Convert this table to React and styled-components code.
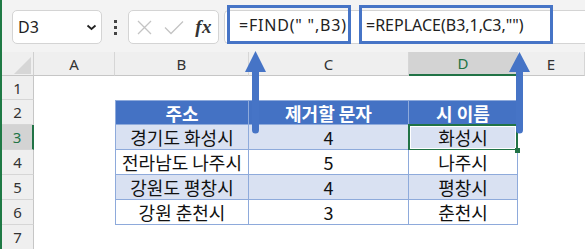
import React from "react";
import styled, { createGlobalStyle } from "styled-components";

// Global reset
const GlobalStyle = createGlobalStyle`
  html, body {
    margin: 0;
    padding: 0;
    background: #fff;
  }
`;

const BLUE = "#4674c6";
const GREEN = "#217346";

const columns = ["A", "B", "C", "D", "E"];

const rows = [
  { kind: "header", cells: ["주소", "제거할 문자", "시 이름"] },
  { kind: "band", cells: ["경기도 화성시", "4", "화성시"] },
  { kind: "plain", cells: ["전라남도 나주시", "5", "나주시"] },
  { kind: "band", cells: ["강원도 평창시", "4", "평창시"] },
  { kind: "plain", cells: ["강원 춘천시", "3", "춘천시"] },
];

// Workbook component
export default function App() {
  return (
    <>
      <GlobalStyle />
      <Page>
        <FormulaBar>
          <NameBox>
            <span>D3</span>
            <svg width="11" height="7" viewBox="0 0 11 7">
              <path d="M1.5 1.5 L5.5 5 L9.5 1.5" fill="none" stroke="#222" strokeWidth="1.8" />
            </svg>
          </NameBox>
          <Dots>
            <i />
            <i />
            <i />
          </Dots>
          <FxBox>
            <svg width="15" height="15" viewBox="0 0 15 15">
              <path d="M1 1 L14 14 M14 1 L1 14" stroke="#c4c4c4" strokeWidth="1.3" />
            </svg>
            <svg width="20" height="15" viewBox="0 0 20 15">
              <path d="M1 7.5 L7 13.5 L19 1.5" fill="none" stroke="#c4c4c4" strokeWidth="1.3" />
            </svg>
            <FxText>fx</FxText>
          </FxBox>
          <FormulaField>
            <Callout $width={124} $pad={9} $gap={2} $spacing={0.8}>
              =FIND(" ",B3)
            </Callout>
            <Callout $width={194} $pad={4} $gap={8}>
              =REPLACE(B3,1,C3,"")
            </Callout>
          </FormulaField>
        </FormulaBar>

        <Sheet>
          <Corner />
          {columns.map((c) => (
            <ColHeader key={c} $active={c === "D"}>
              {c}
            </ColHeader>
          ))}

          <RowHeader>1</RowHeader>
          {columns.map((c) => (
            <Cell key={c} />
          ))}

          {rows.map((row, i) => {
            const n = i + 2;
            return (
              <React.Fragment key={n}>
                <RowHeader $active={n === 3}>{n}</RowHeader>
                <Cell />
                {row.cells.map((text, j) => (
                  <TableCell
                    key={j}
                    $kind={row.kind}
                    $first={j === 0}
                    $top={row.kind === "header"}
                    $active={n === 3 && j === 2}
                  >
                    {text}
                  </TableCell>
                ))}
                <Cell />
              </React.Fragment>
            );
          })}

          <RowHeader>7</RowHeader>
          {columns.map((c) => (
            <Cell key={c} />
          ))}
        </Sheet>

        <Arrows width="585" height="249" viewBox="0 0 585 249">
          <path d="M255.5 51 L266 72 L259 72 L259 130 A3.5 3.5 0 0 1 252 130 L252 72 L245 72 Z" fill={BLUE} />
          <path d="M519.5 52 L530 72 L523 72 L523 130 A3.5 3.5 0 0 1 516 130 L516 72 L509 72 Z" fill={BLUE} />
        </Arrows>
      </Page>
    </>
  );
}

// Styles
const Page = styled.div`
  position: relative;
  width: 585px;
  height: 249px;
  overflow: hidden;
  box-sizing: border-box;
  border-left: 2px solid #1f7a45;
  background: #fff;
`;

const FormulaBar = styled.div`
  display: flex;
  align-items: flex-start;
  height: 52px;
  background: #f3f3f3;
`;

const NameBox = styled.div`
  display: flex;
  align-items: center;
  justify-content: space-between;
  box-sizing: border-box;
  width: 90px;
  height: 34px;
  margin: 10px 0 0 10px;
  padding: 0 4px 0 5px;
  background: #fff;
  border: 1px solid #d4d4d4;
  border-radius: 5px;
  font-family: "Noto Sans", sans-serif;
  font-size: 16px;
  color: #222;
`;

const Dots = styled.div`
  display: flex;
  flex-direction: column;
  align-items: center;
  justify-content: center;
  gap: 3px;
  width: 26px;
  height: 34px;
  margin-top: 10px;

  i {
    width: 3px;
    height: 3px;
    background: #444;
  }
`;

const FxBox = styled.div`
  display: flex;
  align-items: center;
  justify-content: space-between;
  box-sizing: border-box;
  width: 91px;
  height: 34px;
  margin-top: 10px;
  padding: 0 6px 0 8px;
  background: #fff;
  border: 1px solid #d4d4d4;
  border-radius: 5px;
`;

const FxText = styled.span`
  font-family: "Liberation Serif", serif;
  font-style: italic;
  font-weight: bold;
  font-size: 19px;
  color: #333;
  letter-spacing: 0.5px;
`;

const FormulaField = styled.div`
  display: flex;
  align-items: flex-start;
  flex: 1;
  height: 34px;
  margin: 10px 0 0 5px;
  box-sizing: border-box;
  background: #fff;
  border: 1px solid #d4d4d4;
  border-right: none;
  border-radius: 5px 0 0 5px;
`;

const Callout = styled.div`
  display: flex;
  align-items: center;
  box-sizing: border-box;
  width: ${(p) => p.$width}px;
  height: 39px;
  margin: -6px 0 0 ${(p) => p.$gap}px;
  padding-left: ${(p) => p.$pad}px;
  border: 3px solid ${BLUE};
  font-family: "Noto Sans", sans-serif;
  font-size: 16px;
  letter-spacing: ${(p) => p.$spacing || 0}px;
  color: #222;
  white-space: pre;
`;

const Sheet = styled.div`
  display: grid;
  grid-template-columns: 32px 81px 134px 160px 109px 1fr;
  grid-template-rows: 24px 24px repeat(6, 25px);
`;

const Corner = styled.div`
  position: relative;
  background: #efefef;
  border-right: 1px solid #d0d0d0;
  border-bottom: 1px solid #c6c6c6;

  &::after {
    content: "";
    position: absolute;
    right: 2px;
    bottom: 1px;
    border-style: solid;
    border-width: 0 0 17px 17px;
    border-color: transparent transparent #d6d6d6 transparent;
  }
`;

const ColHeader = styled.div`
  display: flex;
  align-items: center;
  justify-content: center;
  box-sizing: border-box;
  background: ${(p) => (p.$active ? "#d3d3d3" : "#efefef")};
  border-right: 1px solid #d6d6d6;
  border-bottom: ${(p) => (p.$active ? `2px solid ${GREEN}` : "1px solid #c6c6c6")};
  font-family: "Noto Sans", sans-serif;
  font-size: 15px;
  color: ${(p) => (p.$active ? GREEN : "#333")};
`;

const RowHeader = styled.div`
  display: flex;
  align-items: center;
  justify-content: center;
  box-sizing: border-box;
  background: ${(p) => (p.$active ? "#d3d3d3" : "#efefef")};
  border-right: ${(p) => (p.$active ? `2px solid ${GREEN}` : "1px solid #c6c6c6")};
  border-bottom: 1px solid #d6d6d6;
  font-family: "Noto Sans", sans-serif;
  font-size: 15px;
  color: ${(p) => (p.$active ? GREEN : "#333")};
`;

const Cell = styled.div`
  background: #fff;
`;

const cellBg = { header: "#4472c4", band: "#d9e1f2", plain: "#fff" };

const TableCell = styled.div`
  position: relative;
  display: flex;
  align-items: center;
  justify-content: center;
  box-sizing: border-box;
  background: ${(p) => cellBg[p.$kind]};
  border-right: 1px solid #8eaadb;
  border-bottom: 1px solid #8eaadb;
  border-left: ${(p) => (p.$first ? "1px solid #8eaadb" : "none")};
  border-top: ${(p) => (p.$top ? "1px solid #8eaadb" : "none")};
  font-family: "Noto Sans CJK KR", "Noto Sans", sans-serif;
  font-size: 18px;
  font-weight: ${(p) => (p.$kind === "header" ? 700 : 400)};
  color: ${(p) => (p.$kind === "header" ? "#fff" : "#111")};
  white-space: nowrap;

  ${(p) =>
    p.$active &&
    `
    &::after {
      content: "";
      position: absolute;
      inset: -1px -1px -2px -1px;
      border: 2px solid ${GREEN};
      box-shadow: inset 0 0 0 1px #fff;
    }
    &::before {
      content: "";
      position: absolute;
      right: -3px;
      bottom: -4px;
      width: 5px;
      height: 5px;
      background: ${GREEN};
      z-index: 1;
    }
  `}
`;

const Arrows = styled.svg`
  position: absolute;
  left: -2px;
  top: 0;
  pointer-events: none;
  z-index: 5;
`;
